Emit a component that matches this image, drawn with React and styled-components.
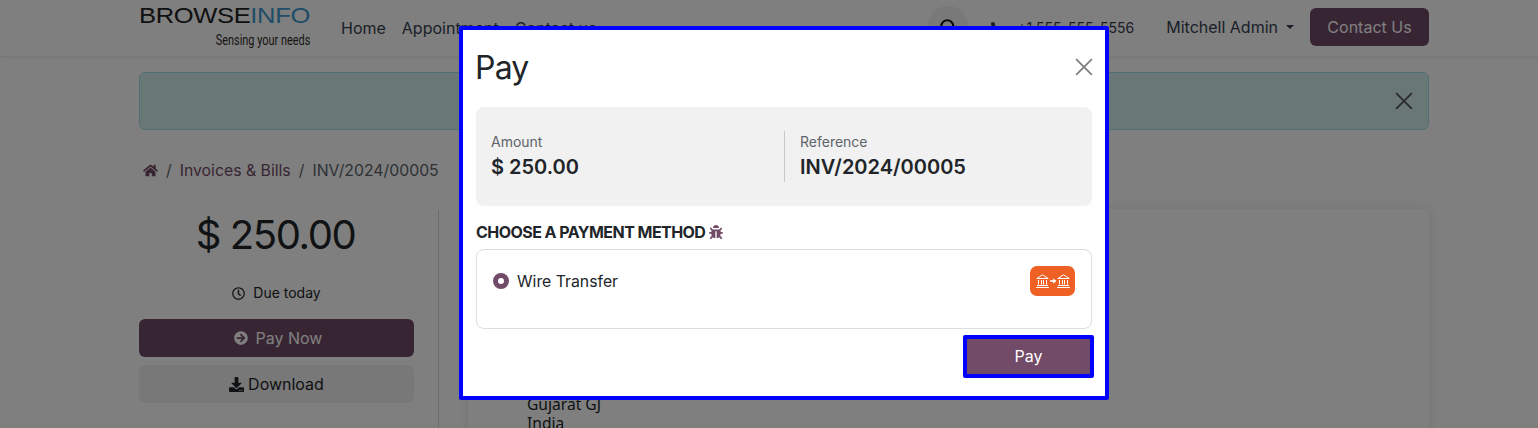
import React from 'react';
import styled, { createGlobalStyle } from 'styled-components';
import { FaHome, FaRegClock, FaArrowCircleRight, FaDownload, FaBug, FaPhoneAlt } from 'react-icons/fa';
import { FiSearch } from 'react-icons/fi';

const GlobalStyle = createGlobalStyle`
    html, body {
        margin: 0;
        height: 100%;
        overflow: hidden;
        background: #fff;
        font-family: Inter, "Noto Sans", sans-serif;
        color: #212529;
    }
    * { box-sizing: border-box; }
`;

function BankLogo() {
    const bank = (x) => (
        <g transform={`translate(${x} 0)`} stroke="#fff" fill="none" strokeWidth="1">
            <path d="M0.8 4.5 L6.5 0.8 L12.2 4.5 Z" />
            <path d="M2.5 6V10.5M5.5 6V10.5M7.5 6V10.5M10.5 6V10.5" />
            <path d="M1 11.5H12M0 13.5H13" />
        </g>
    );
    return (
        <BankSvg viewBox="0 0 34 14">
            {bank(0)}
            <path d="M14 7H18" stroke="#fff" strokeWidth="1.6" />
            <path d="M17.2 4.2L20.4 7L17.2 9.8Z" fill="#fff" />
            {bank(21)}
        </BankSvg>
    );
}

export default function App() {
    return (
        <>
            <GlobalStyle />
            <Page>
                <Header>
                    <Container>
                        <HeaderRow>
                            <Logo>
                                <LogoMark>BROWSE<span>INFO</span></LogoMark>
                                <LogoTag>Sensing your needs</LogoTag>
                            </Logo>
                            <Nav>
                                <NavLink>Home</NavLink>
                                <NavLink>Appointment</NavLink>
                                <NavLink>Contact us</NavLink>
                            </Nav>
                            <HeaderRight>
                                <SearchCircle><FiSearch /></SearchCircle>
                                <Phone><FaPhoneAlt /><span>+1 555-555-5556</span></Phone>
                                <UserMenu>Mitchell Admin<Caret /></UserMenu>
                                <ContactButton>Contact Us</ContactButton>
                            </HeaderRight>
                        </HeaderRow>
                    </Container>
                </Header>
                <Container>
                    <AlertBar>
                        <CloseIcon viewBox="0 0 16 16" $dark>
                            <path d="M1 1L15 15M15 1L1 15" />
                        </CloseIcon>
                    </AlertBar>
                    <Breadcrumb>
                        <FaHome />
                        <Slash>/</Slash>
                        <span>Invoices &amp; Bills</span>
                        <Slash>/</Slash>
                        <BreadcrumbCurrent>INV/2024/00005</BreadcrumbCurrent>
                    </Breadcrumb>
                    <Columns>
                        <Sidebar>
                            <BigAmount>$ 250.00</BigAmount>
                            <DueLine><FaRegClock />Due today</DueLine>
                            <PayNow><FaArrowCircleRight />Pay Now</PayNow>
                            <DownloadButton><FaDownload />Download</DownloadButton>
                        </Sidebar>
                        <InvoiceCard>
                            <AddressLine>Gujarat GJ</AddressLine>
                            <AddressLine>India</AddressLine>
                        </InvoiceCard>
                    </Columns>
                </Container>
            </Page>
            <Backdrop />
            <Modal>
                <ModalHeader>
                    <ModalTitle>Pay</ModalTitle>
                    <CloseIcon viewBox="0 0 16 16">
                        <path d="M1 1L15 15M15 1L1 15" />
                    </CloseIcon>
                </ModalHeader>
                <SummaryBox>
                    <SummaryCell>
                        <SummaryLabel>Amount</SummaryLabel>
                        <SummaryValue>$ 250.00</SummaryValue>
                    </SummaryCell>
                    <SummaryCell $divided>
                        <SummaryLabel>Reference</SummaryLabel>
                        <SummaryValue>INV/2024/00005</SummaryValue>
                    </SummaryCell>
                </SummaryBox>
                <MethodHeading>CHOOSE A PAYMENT METHOD <BugIcon /></MethodHeading>
                <MethodCard>
                    <Radio />
                    <MethodName>Wire Transfer</MethodName>
                    <MethodBadge><BankLogo /></MethodBadge>
                </MethodCard>
                <ModalFooter>
                    <PayButton>Pay</PayButton>
                </ModalFooter>
            </Modal>
        </>
    );
}

const Page = styled.div`
    width: 1538px;
    height: 428px;
    overflow: hidden;
`;

const Header = styled.header`
    height: 57px;
    border-bottom: 1px solid #eee;
    box-shadow: 0 1px 3px rgba(0, 0, 0, .06);
`;

const Container = styled.div`
    width: 1290px;
    margin-left: 139px;
`;

const HeaderRow = styled.div`
    display: flex;
    align-items: flex-start;
    height: 56px;
`;

const Logo = styled.div`
    width: 171px;
    padding-top: 6px;
    display: flex;
    flex-direction: column;
    align-items: flex-end;
`;

const LogoMark = styled.div`
    width: 171px;
    margin-left: -1px;
    font-family: "Liberation Sans", sans-serif;
    font-size: 22px;
    line-height: 20px;
    letter-spacing: -0.3px;
    color: #222;
    white-space: nowrap;
    transform: scaleX(1.16);
    transform-origin: left;

    span {
        color: #3f9ad0;
    }
`;

const LogoTag = styled.div`
    font-family: Roboto, sans-serif;
    font-size: 14px;
    line-height: 16px;
    margin-top: 6px;
    color: #2c2c2c;
    transform: scaleX(.78);
    transform-origin: right;
    white-space: nowrap;
`;

const Nav = styled.nav`
    display: flex;
    gap: 16px;
    margin-left: 31px;
    padding-top: 18px;
`;

const NavLink = styled.span`
    font-size: 16px;
    line-height: 20px;
    color: #374151;
`;

const HeaderRight = styled.div`
    display: flex;
    align-items: center;
    margin-left: auto;
    padding-top: 6px;
`;

const SearchCircle = styled.div`
    width: 42px;
    height: 42px;
    border-radius: 50%;
    background: #f3f3f3;
    display: flex;
    align-items: center;
    justify-content: center;
    font-size: 18px;
    color: #111;

    svg {
        stroke-width: 2.6;
    }
`;

const Phone = styled.div`
    display: flex;
    align-items: center;
    gap: 15px;
    margin-left: 22px;
    font-size: 14px;
    color: #374151;

    svg {
        font-size: 11px;
    }
`;

const UserMenu = styled.div`
    display: flex;
    align-items: center;
    margin-left: 32px;
    font-size: 16px;
    color: #374151;
`;

const Caret = styled.span`
    width: 0;
    height: 0;
    margin-left: 8px;
    border-top: 4.5px solid #374151;
    border-left: 4.5px solid transparent;
    border-right: 4.5px solid transparent;
`;

const ContactButton = styled.div`
    width: 119px;
    height: 38px;
    margin-left: 16px;
    border-radius: 6px;
    background: #714b67;
    color: #fff;
    font-size: 16px;
    display: flex;
    align-items: center;
    justify-content: center;
`;

const AlertBar = styled.div`
    height: 58px;
    margin-top: 15px;
    padding-right: 15px;
    border: 1px solid #a6dce4;
    border-radius: 6px;
    background: #d2eeee;
    display: flex;
    align-items: center;
    justify-content: flex-end;
`;

const CloseIcon = styled.svg`
    width: 18px;
    height: 18px;
    margin-bottom: ${props => props.$dark ? '0' : '2px'};
    margin-right: ${props => props.$dark ? '0' : '-1px'};

    path {
        fill: none;
        stroke: ${props => props.$dark ? '#555' : '#7f7f7f'};
        stroke-width: 1.6;
    }
`;

const Breadcrumb = styled.div`
    display: flex;
    align-items: center;
    gap: 8px;
    height: 24px;
    margin-top: 28px;
    padding-left: 4px;
    font-size: 15.8px;
    color: #714b67;

    svg {
        font-size: 15px;
    }
`;

const Slash = styled.span`
    color: #5c636a;
`;

const BreadcrumbCurrent = styled.span`
    color: #5c636a;
`;

const Columns = styled.div`
    display: flex;
    margin-top: 28px;
`;

const Sidebar = styled.aside`
    width: 300px;
    height: 300px;
    padding-right: 24px;
    border-right: 1px solid #d8d8d8;
`;

const BigAmount = styled.div`
    margin-top: -1px;
    padding-right: 2px;
    font-size: 40px;
    line-height: 52px;
    letter-spacing: -1.4px;
    text-align: center;
`;

const DueLine = styled.div`
    display: flex;
    align-items: center;
    justify-content: center;
    gap: 8px;
    margin-top: 22px;
    font-size: 14px;
    line-height: 20px;

    svg {
        font-size: 13px;
    }
`;

const PayNow = styled.div`
    display: flex;
    align-items: center;
    justify-content: center;
    gap: 8px;
    height: 38px;
    margin-top: 16px;
    padding-left: 3px;
    border-radius: 6px;
    background: #714b67;
    color: #fff;
    font-size: 16px;

    svg {
        font-size: 14px;
    }
`;

const DownloadButton = styled.div`
    display: flex;
    align-items: center;
    justify-content: center;
    gap: 4px;
    height: 38px;
    margin-top: 8px;
    border-radius: 6px;
    background: #f1f1f1;
    font-size: 16px;

    svg {
        font-size: 15px;
    }
`;

const InvoiceCard = styled.section`
    width: 961px;
    height: 300px;
    margin-left: 29px;
    margin-top: -1px;
    padding: 186px 0 0 59px;
    background: #fff;
    box-shadow: 0 0 12px rgba(0, 0, 0, .1);
`;

const AddressLine = styled.div`
    font-family: "Noto Sans", sans-serif;
    font-size: 15.6px;
    line-height: 19px;
`;

const Backdrop = styled.div`
    position: fixed;
    inset: 0;
    background: rgba(0, 0, 0, .5);
`;

const Modal = styled.div`
    position: fixed;
    left: 459px;
    top: 26px;
    width: 650px;
    height: 374px;
    padding: 0 13px;
    background: #fff;
    border: 4px solid #0000ff;
    border-radius: 2px;
`;

const ModalHeader = styled.div`
    display: flex;
    align-items: center;
    justify-content: space-between;
    height: 77px;
    padding-bottom: 2px;
`;

const ModalTitle = styled.h5`
    margin: 0 0 0 -1px;
    font-size: 32px;
    font-weight: 400;
    line-height: 38px;
    letter-spacing: -0.8px;
`;

const SummaryBox = styled.div`
    display: grid;
    grid-template-columns: 300px 1fr;
    align-items: center;
    height: 99px;
    padding: 0 15px;
    border-radius: 8px;
    background: #f1f1f1;
`;

const SummaryCell = styled.div`
    height: 51px;
    padding-left: ${props => props.$divided ? '15px' : '0'};
    margin-left: ${props => props.$divided ? '-7px' : '0'};
    border-left: ${props => props.$divided ? '1px solid #c8c8c8' : 'none'};
`;

const SummaryLabel = styled.div`
    font-size: 14px;
    line-height: 22px;
    color: #5f646a;
`;

const SummaryValue = styled.div`
    font-size: 20px;
    font-weight: 600;
    line-height: 28px;
`;

const MethodHeading = styled.div`
    display: flex;
    align-items: center;
    gap: 4px;
    margin-top: 16px;
    height: 20px;
    font-size: 16px;
    font-weight: 700;
    letter-spacing: -0.55px;
`;

const BugIcon = styled(FaBug)`
    font-size: 14px;
    color: #714b67;
`;

const MethodCard = styled.div`
    display: flex;
    align-items: flex-start;
    height: 80px;
    margin-top: 7px;
    padding: 16px;
    border: 1px solid #dedede;
    border-radius: 8px;
`;

const Radio = styled.span`
    width: 16px;
    height: 16px;
    margin-top: 7px;
    border-radius: 50%;
    border: 5px solid #714b67;
    background: #fff;
`;

const MethodName = styled.span`
    margin-left: 8px;
    margin-top: 4px;
    font-size: 15.8px;
    line-height: 24px;
`;

const MethodBadge = styled.div`
    display: flex;
    align-items: center;
    justify-content: center;
    width: 45px;
    height: 30px;
    margin-left: auto;
    border-radius: 7px;
    background: #ef6024;
`;

const BankSvg = styled.svg`
    width: 34px;
    height: 14px;
    margin-left: 1px;
`;

const ModalFooter = styled.div`
    display: flex;
    justify-content: flex-end;
    margin-top: 6px;
    margin-right: -2px;
`;

const PayButton = styled.button`
    width: 131px;
    height: 43px;
    padding: 0 0 2px;
    border: 4px solid #0000ff;
    border-radius: 2px;
    background: #714b67;
    color: #fff;
    font-family: Inter, sans-serif;
    font-size: 16px;
`;
